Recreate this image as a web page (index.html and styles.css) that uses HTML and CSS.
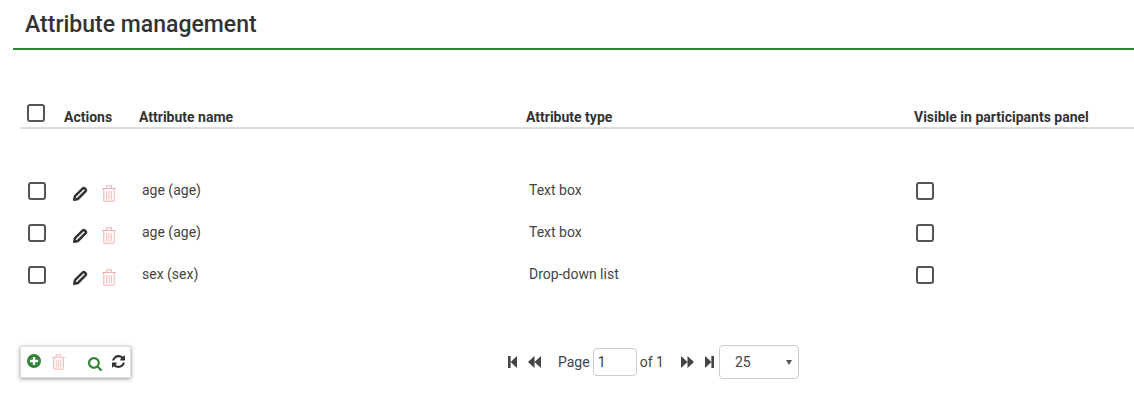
FILE: index.html
```html
<!DOCTYPE html>
<html lang="en">
<head>
<meta charset="utf-8">
<title>Attribute management</title>
<link rel="stylesheet" href="styles.css">
</head>
<body>
<svg class="defs" width="0" height="0" aria-hidden="true">
  <symbol id="i-pencil" viewBox="0 0 16 16"><path d="M2.200 13.800l.8-3.600 7.600-7.600q1.200-1.100 2.400 0l.4.400q1.100 1.200 0 2.400L5.800 13z" fill="none" stroke="currentColor" stroke-width="2.500" stroke-linejoin="round"/></symbol>
  <symbol id="i-trash" viewBox="0 0 14 17"><path fill="none" stroke="currentColor" d="M0 3.500h14M4.500 3V.8h5V3M1.800 3.500v12.700h10.400V3.500"/><path fill="currentColor" opacity=".75" d="M4 6h1.200v8.500H4zM6.400 6h1.200v8.500H6.400zM8.800 6H10v8.500H8.800z"/></symbol>
  <symbol id="i-plus" viewBox="128 128 1536 1536"><path fill="currentColor" d="M1344 960v-128q0-26-19-45t-45-19h-256v-256q0-26-19-45t-45-19h-128q-26 0-45 19t-19 45v256h-256q-26 0-45 19t-19 45v128q0 26 19 45t45 19h256v256q0 26 19 45t45 19h128q26 0 45-19t19-45v-256h256q26 0 45-19t19-45zm320-64q0 209-103 385.500t-279.500 279.500-385.500 103-385.500-103-279.500-279.500-103-385.500 103-385.500 279.500-279.500 385.500-103 385.500 103 279.500 279.500 103 385.500z"/></symbol>
  <symbol id="i-search" viewBox="64 128 1664 1664"><path fill="currentColor" d="M1216 832q0-185-131.500-316.500t-316.500-131.500-316.500 131.500-131.500 316.500 131.500 316.500 316.500 131.500 316.500-131.500 131.500-316.500zm512 832q0 52-38 90t-90 38q-54 0-90-38l-343-342q-179 124-399 124-143 0-273.500-55.500t-225-150-150-225-55.500-273.500 55.500-273.500 150-225 225-150 273.500-55.500 273.500 55.500 225 150 150 225 55.500 273.500q0 220-124 399l343 343q37 37 37 90z"/></symbol>
  <symbol id="i-refresh" viewBox="128 128 1536 1536"><path fill="currentColor" d="M1639 1056q0 5-1 7-64 268-268 434.500t-478 166.500q-146 0-282.500-55t-243.500-157l-129 129q-19 19-45 19t-45-19-19-45v-448q0-26 19-45t45-19h448q26 0 45 19t19 45-19 45l-137 137q71 66 161 102t187 36q134 0 250-65t186-179q11-17 53-117 8-23 30-23h192q13 0 22.500 9.500t9.500 22.500zm25-800v448q0 26-19 45t-45 19h-448q-26 0-45-19t-19-45 19-45l138-138q-148-137-349-137-134 0-250 65t-186 179q-11 17-53 117-8 23-30 23h-199q-13 0-22.500-9.500t-9.500-22.500v-7q65-268 270-434.500t480-166.500q146 0 284 55.500t245 156.500l130-129q19-19 45-19t45 19 19 45z"/></symbol>
  <symbol id="i-first" viewBox="0 0 9 12"><path fill="currentColor" d="M0 0h2.600v12H0zM2.600 6 9 0v12z"/></symbol>
  <symbol id="i-prev" viewBox="0 0 13 12"><path fill="currentColor" d="M0 6 6.500 0v12zM6.500 6 13 0v12z"/></symbol>
  <symbol id="i-next" viewBox="0 0 13 12"><path fill="currentColor" d="M13 6 6.500 0v12zM6.500 6 0 0v12z"/></symbol>
  <symbol id="i-last" viewBox="0 0 9 12"><path fill="currentColor" d="M9 0H6.400v12H9zM6.400 6 0 0v12z"/></symbol>
</svg>
<main class="page">
  <h1 class="title">Attribute management</h1>
  <section class="grid head-row">
    <span class="cell-check"><span class="box"></span></span>
    <span class="th">Actions</span>
    <span class="th">Attribute name</span>
    <span class="th">Attribute type</span>
    <span class="th">Visible in participants panel</span>
  </section>
  <section class="rows">
    <div class="grid row">
      <span class="cell-check cell-check-row"><span class="box"></span></span>
      <span class="actions"><svg class="ic-pencil"><use href="#i-pencil"/></svg><svg class="ic-trash"><use href="#i-trash"/></svg></span>
      <span class="td">age (age)</span>
      <span class="td">Text box</span>
      <span class="cell-visible"><span class="box"></span></span>
    </div>
    <div class="grid row">
      <span class="cell-check cell-check-row"><span class="box"></span></span>
      <span class="actions"><svg class="ic-pencil"><use href="#i-pencil"/></svg><svg class="ic-trash"><use href="#i-trash"/></svg></span>
      <span class="td">age (age)</span>
      <span class="td">Text box</span>
      <span class="cell-visible"><span class="box"></span></span>
    </div>
    <div class="grid row">
      <span class="cell-check cell-check-row"><span class="box"></span></span>
      <span class="actions"><svg class="ic-pencil"><use href="#i-pencil"/></svg><svg class="ic-trash"><use href="#i-trash"/></svg></span>
      <span class="td">sex (sex)</span>
      <span class="td">Drop-down list</span>
      <span class="cell-visible"><span class="box"></span></span>
    </div>
  </section>
  <footer class="footer">
    <div class="toolbar">
      <svg class="ic-plus"><use href="#i-plus"/></svg>
      <svg class="ic-trash-tool"><use href="#i-trash"/></svg>
      <svg class="ic-search"><use href="#i-search"/></svg>
      <svg class="ic-refresh"><use href="#i-refresh"/></svg>
    </div>
    <div class="pager">
      <svg class="ic-step"><use href="#i-first"/></svg>
      <svg class="ic-skip"><use href="#i-prev"/></svg>
      <span class="page-label">Page</span>
      <span class="page-input">1</span>
      <span class="page-of">of 1</span>
      <svg class="ic-skip ic-next"><use href="#i-next"/></svg>
      <svg class="ic-step"><use href="#i-last"/></svg>
      <span class="page-size">25<span class="caret"></span></span>
    </div>
  </footer>
</main>
</body>
</html>
```
FILE: styles.css
```css
* { box-sizing: border-box; }
html, body { margin: 0; padding: 0; background: #fff; }
body { font-family: Roboto, "Liberation Sans", sans-serif; font-size: 14px; color: #444; width: 1134px; height: 403px; overflow: hidden; }
.defs { position: absolute; }
.page { padding-left: 13px; }
.title { margin: 0; height: 50px; padding: 10px 0 0 12px; border-bottom: 2px solid #328637; font-size: 23px; line-height: 30px; font-weight: 500; color: #333; }
.grid { display: grid; grid-template-columns: 44px 75px 387px 388px 1fr; margin-left: 7px; }
.head-row { margin-top: 54px; height: 25px; border-bottom: 2px solid #ddd; font-weight: 700; }
.th { line-height: 18px; padding-top: 4px; color: #333; }
.cell-check { padding-left: 7px; }
.cell-check-row { padding-left: 8px; }
.box { display: block; width: 18px; height: 18px; border: 2px solid #555; border-radius: 3px; background: #fff; }
.rows { margin-top: 41px; }
.row { height: 42px; align-items: center; }
.td { padding-left: 3px; margin-top: -3px; }
.actions { display: flex; align-items: center; padding: 5px 0 0 8px; gap: 14px; }
.ic-pencil { width: 16px; height: 16px; color: #333; }
.ic-trash { width: 14px; height: 17px; color: #f2b0b0; }
.cell-visible { padding-left: 2px; }
.footer { display: flex; align-items: center; margin-top: 49px; }
.toolbar { display: flex; align-items: center; margin-left: 7px; width: 111px; height: 32px; background: #fff; border: 1px solid #ddd; box-shadow: 0 1px 4px rgba(0,0,0,.4); padding-left: 6px; }
.ic-plus { width: 14px; height: 14px; color: #328637; margin-top: -3px; }
.ic-trash-tool { width: 13px; height: 16px; margin-left: 11px; color: #f2b0b0; }
.ic-search { width: 14px; height: 14px; margin-left: 23px; color: #328637; margin-top: 3px; }
.ic-refresh { width: 13px; height: 13px; margin-left: 10px; color: #333; margin-top: -1px; }
.pager { display: flex; align-items: center; margin-left: 377px; }
.ic-step { width: 9px; height: 12px; color: #444; }
.ic-skip { width: 13px; height: 12px; color: #444; margin-left: 11px; }
.ic-next { margin-left: 17px; margin-right: 11px; }
.page-label { margin-left: 17px; }
.page-input { width: 44px; height: 28px; margin-left: 3px; padding: 3px 0 0 4px; border: 1px solid #ccc; border-radius: 4px; line-height: 20px; }
.page-of { margin-left: 3px; }
.page-size { position: relative; width: 80px; height: 34px; margin-left: 5px; padding: 6px 0 0 15px; border: 1px solid #ccc; border-radius: 4px; line-height: 20px; }
.caret { position: absolute; right: 6px; top: 14px; border: 3.500px solid transparent; border-top: 5px solid #555; border-bottom: 0; }
```
